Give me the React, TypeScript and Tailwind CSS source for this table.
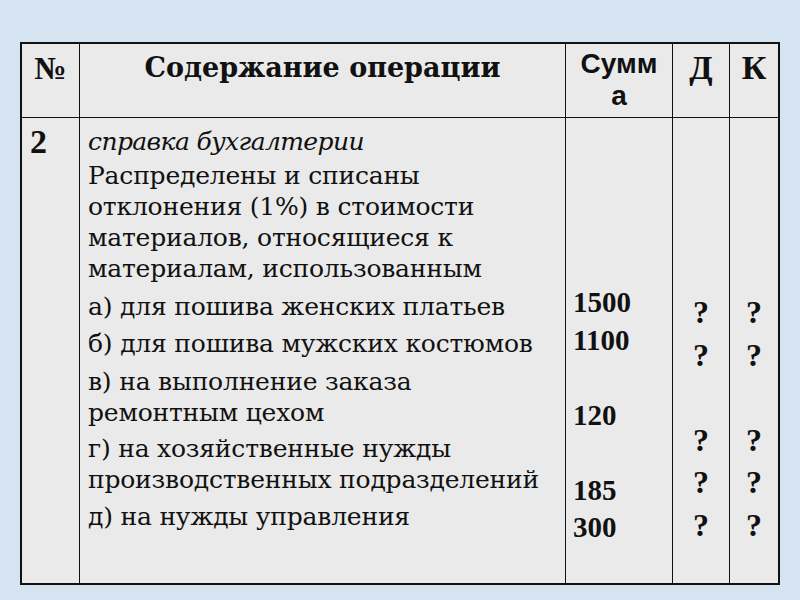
import React from "react";

const serif = { fontFamily: '"Liberation Serif", "Times New Roman", serif' };

export default function App() {
  return (
    <div className="w-[800px] h-[600px] bg-[#d6e3f1] pt-[42px] pl-[20px]">
      <div className="w-[760px] h-[543px] border-2 border-[#111] bg-[#eaeaea] flex flex-col text-[#111]">
        {/* header */}
        <div className="flex h-[74px] border-b border-[#111]">
          <div
            className="w-[58px] border-r border-[#111] text-center font-bold text-[32px] leading-none pt-[8px]"
            style={serif}
          >
            №
          </div>
          <div
            className="w-[486px] border-r border-[#111] text-center font-bold text-[27px] leading-none pt-[10px]"
            style={{ fontFamily: '"DejaVu Serif", serif' }}
          >
            Содержание операции
          </div>
          <div
            className="w-[107px] border-r border-[#111] text-center font-bold text-[28px] leading-[32px] pt-[4px]"
            style={{ fontFamily: '"Liberation Sans", Arial, sans-serif' }}
          >
            Сумм
            <br />а
          </div>
          <div
            className="w-[57px] border-r border-[#111] text-center font-bold text-[34px] leading-none pt-[7px]"
            style={serif}
          >
            Д
          </div>
          <div
            className="flex-1 text-center font-bold text-[34px] leading-none pt-[7px]"
            style={serif}
          >
            К
          </div>
        </div>
        {/* body */}
        <div className="flex flex-1">
          <div
            className="w-[58px] border-r border-[#111] font-bold text-[34px] leading-none pl-[8px] pt-[7px]"
            style={serif}
          >
            2
          </div>
          <div
            className="w-[486px] border-r border-[#111] pl-[8px] pt-[8px] text-[25px] leading-[31px] whitespace-nowrap tracking-[-0.2px]"
            style={{ fontFamily: '"DejaVu Serif", serif' }}
          >
            <p className="italic tracking-[-0.6px]">справка бухгалтерии</p>
            <p className="mt-[3px]">
              Распределены и списаны
              <br />
              отклонения (1%) в стоимости
              <br />
              материалов, относящиеся к
              <br />
              материалам, использованным
            </p>
            <p className="mt-[7px]">а) для пошива женских платьев</p>
            <p className="mt-[6px]">б) для пошива мужских костюмов</p>
            <p className="mt-[7px]">
              в) на выполнение заказа
              <br />
              ремонтным цехом
            </p>
            <p className="mt-[5px]">
              г) на хозяйственные нужды
              <br />
              производственных подразделений
            </p>
            <p className="mt-[6px]">д) на нужды управления</p>
          </div>
          <div
            className="w-[107px] border-r border-[#111] pl-[7px] pt-[166px] font-bold text-[29px] leading-[37.5px]"
            style={serif}
          >
            <div>1500</div>
            <div>1100</div>
            <div>&nbsp;</div>
            <div>120</div>
            <div>&nbsp;</div>
            <div>185</div>
            <div>300</div>
          </div>
          <div
            className="w-[57px] border-r border-[#111] text-center pt-[173px] font-bold text-[32px] leading-[42.5px]"
            style={serif}
          >
            <div>?</div>
            <div>?</div>
            <div>&nbsp;</div>
            <div>?</div>
            <div>?</div>
            <div>?</div>
          </div>
          <div
            className="flex-1 text-center pt-[173px] font-bold text-[32px] leading-[42.5px]"
            style={serif}
          >
            <div>?</div>
            <div>?</div>
            <div>&nbsp;</div>
            <div>?</div>
            <div>?</div>
            <div>?</div>
          </div>
        </div>
      </div>
    </div>
  );
}
